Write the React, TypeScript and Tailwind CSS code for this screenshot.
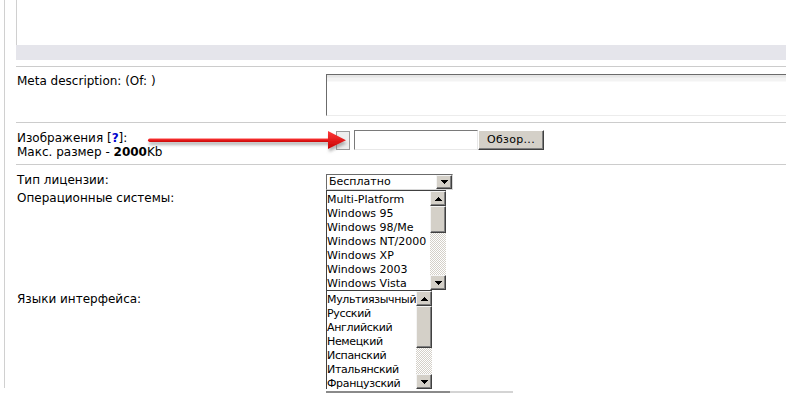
import React from "react";

const osList = [
  "Multi-Platform",
  "Windows 95",
  "Windows 98/Me",
  "Windows NT/2000",
  "Windows XP",
  "Windows 2003",
  "Windows Vista",
];

const langList = [
  "Мультиязычный",
  "Русский",
  "Английский",
  "Немецкий",
  "Испанский",
  "Итальянский",
  "Французский",
];

// tiny classic win arrow glyph
function Tri({ down }: { down?: boolean }) {
  return (
    <svg width="7" height="4" viewBox="0 0 7 4" shapeRendering="crispEdges">
      {down ? (
        <polygon points="0,0 7,0 3.5,4" fill="#000" />
      ) : (
        <polygon points="0,4 7,4 3.5,0" fill="#000" />
      )}
    </svg>
  );
}

function ScrollBtn({ down, className = "" }: { down?: boolean; className?: string }) {
  return (
    <div
      className={`flex items-center justify-center bg-[#d4d0c8] border border-t-[#f4f4f4] border-l-[#f4f4f4] border-r-[#404040] border-b-[#404040] shadow-[inset_-1px_-1px_0_#808080] ${className}`}
    >
      <Tri down={down} />
    </div>
  );
}

interface ListBoxProps {
  items: string[];
  boxClass: string;
  thumbClass: string;
  textClass?: string;
}

function ListBox({ items, boxClass, thumbClass, textClass = "" }: ListBoxProps) {
  return (
    <div className={`flex bg-white border-t border-l border-[#404040] ${boxClass}`}>
      <div className="flex-1 overflow-hidden pt-[2px]">
        {items.map((item) => (
          <div key={item} className={`leading-[14px] text-[11px] text-black whitespace-nowrap ${textClass}`}>
            {item}
          </div>
        ))}
      </div>
      <div className="w-[16px] shrink-0 flex flex-col">
        <ScrollBtn className="h-[15px]" />
        <div
          className={`bg-[#d4d0c8] border border-t-[#f4f4f4] border-l-[#f4f4f4] border-r-[#404040] border-b-[#404040] shadow-[inset_-1px_-1px_0_#808080] ${thumbClass}`}
        />
        <div className="flex-1 bg-[repeating-conic-gradient(#d4d0c8_0_25%,#ffffff_0_50%)] bg-[length:2px_2px]" />
        <ScrollBtn down className="h-[15px]" />
      </div>
    </div>
  );
}

export default function App() {
  return (
    <div className="relative w-[786px] h-[393px] overflow-hidden bg-white text-black font-['DejaVu_Sans',Verdana,sans-serif] text-[12px]">
      <div className="ml-[4px] h-[388px] border-l border-[#d0d0d0] pl-[11px]">
        {/* tail of the block above */}
        <div className="h-[45px] border-l border-[#d0d0d0]" />
        <div className="h-[15px] bg-[#e5e5eb]" />
        <div className="h-[7px] border-b border-[#cccccc]" />

        {/* Meta description */}
        <div className="flex h-[56px] border-b border-[#cccccc]">
          <div className="w-[310px] shrink-0 pl-[1px] pt-[7px] leading-[14px]">Meta description: (Of: )</div>
          <div className="pt-[7px]">
            <div className="w-[480px] h-[42px] border-t border-l border-[#6b6b6b] border-b border-b-[#ececec] bg-[linear-gradient(#e6e6e6_0,#e6e6e6_2px,#f3f3f3_3px,#f3f3f3_6px,#ffffff_7px)]" />
          </div>
        </div>

        {/* Images */}
        <div className="flex h-[42px] border-b border-[#cccccc]">
          <div className="w-[310px] shrink-0 pl-[1px] pt-[8px] leading-[14px]">
            <div>
              Изображения [<span className="font-bold text-[#0000cc]">?</span>]:
            </div>
            <div>
              Макс. размер - <span className="font-bold">2000</span>Kb
            </div>
          </div>
          <div className="flex items-start pt-[7px]">
            <div className="ml-[10px] mt-[1px] w-[14px] h-[19px] bg-[#eeeeee] border border-[#9a9a9a]" />
            <div className="ml-[4px] w-[124px] h-[20px] bg-white border-t border-l border-[#7a7a7a] border-b border-r border-b-[#e8e8e8] border-r-[#e8e8e8]" />
            <div className="w-[66px] h-[20px] flex items-center justify-center bg-[#d4d0c8] border border-t-white border-l-white border-r-[#404040] border-b-[#404040] shadow-[inset_-1px_-1px_0_#808080] text-[11px] tracking-[0.3px]">
              Обзор...
            </div>
          </div>
        </div>

        {/* License */}
        <div className="flex h-[25px]">
          <div className="w-[310px] shrink-0 pl-[1px] pt-[8px] leading-[14px]">Тип лицензии:</div>
          <div className="pt-[9px]">
            <div className="w-[127px] h-[16px] flex bg-white border-t border-l border-[#6b6b6b] border-b border-r border-b-[#d8d8d8] border-r-[#d8d8d8]">
              <div className="flex-1 pl-[2px] leading-[14px] text-[11px]">Бесплатно</div>
              <ScrollBtn down className="w-[16px] h-[14px]" />
            </div>
          </div>
        </div>

        {/* OS */}
        <div className="flex h-[100px]">
          <div className="w-[310px] shrink-0 pl-[1px] pt-[1px] leading-[14px]">Операционные системы:</div>
          <ListBox items={osList} boxClass="w-[120px] h-[100px]" thumbClass="h-[27px]" />
        </div>

        {/* Languages */}
        <div className="flex">
          <div className="w-[310px] shrink-0 pl-[1px] pt-[2px] leading-[14px]">Языки интерфейса:</div>
          <div>
            <ListBox
              items={langList}
              boxClass="w-[106px] h-[99px]"
              thumbClass="h-[42px]"
              textClass="tracking-[-0.35px]"
            />
            <div className="mt-[2px] flex">
              <div className="w-[124px] h-[2px] bg-[#8a8a8a]" />
              <div className="w-[63px] h-[2px] bg-[#d4d4d4]" />
            </div>
          </div>
        </div>
      </div>

      {/* red pointer arrow */}
      <svg className="absolute left-[140px] top-[124px]" width="215" height="34" viewBox="0 0 215 34">
        <defs>
          <linearGradient id="arrowRed" x1="0" y1="0" x2="0" y2="1">
            <stop offset="0" stopColor="#ff3a3a" />
            <stop offset="1" stopColor="#c80000" />
          </linearGradient>
          <filter id="arrowShadow" x="-10%" y="-50%" width="120%" height="200%">
            <feDropShadow dx="1" dy="3" stdDeviation="1.5" floodColor="#777" floodOpacity="0.55" />
          </filter>
        </defs>
        <g filter="url(#arrowShadow)">
          <rect x="8" y="14.5" width="184" height="3.5" rx="1.7" fill="url(#arrowRed)" />
          <polygon points="188,7 206,16.2 188,25" fill="url(#arrowRed)" />
        </g>
      </svg>
    </div>
  );
}
